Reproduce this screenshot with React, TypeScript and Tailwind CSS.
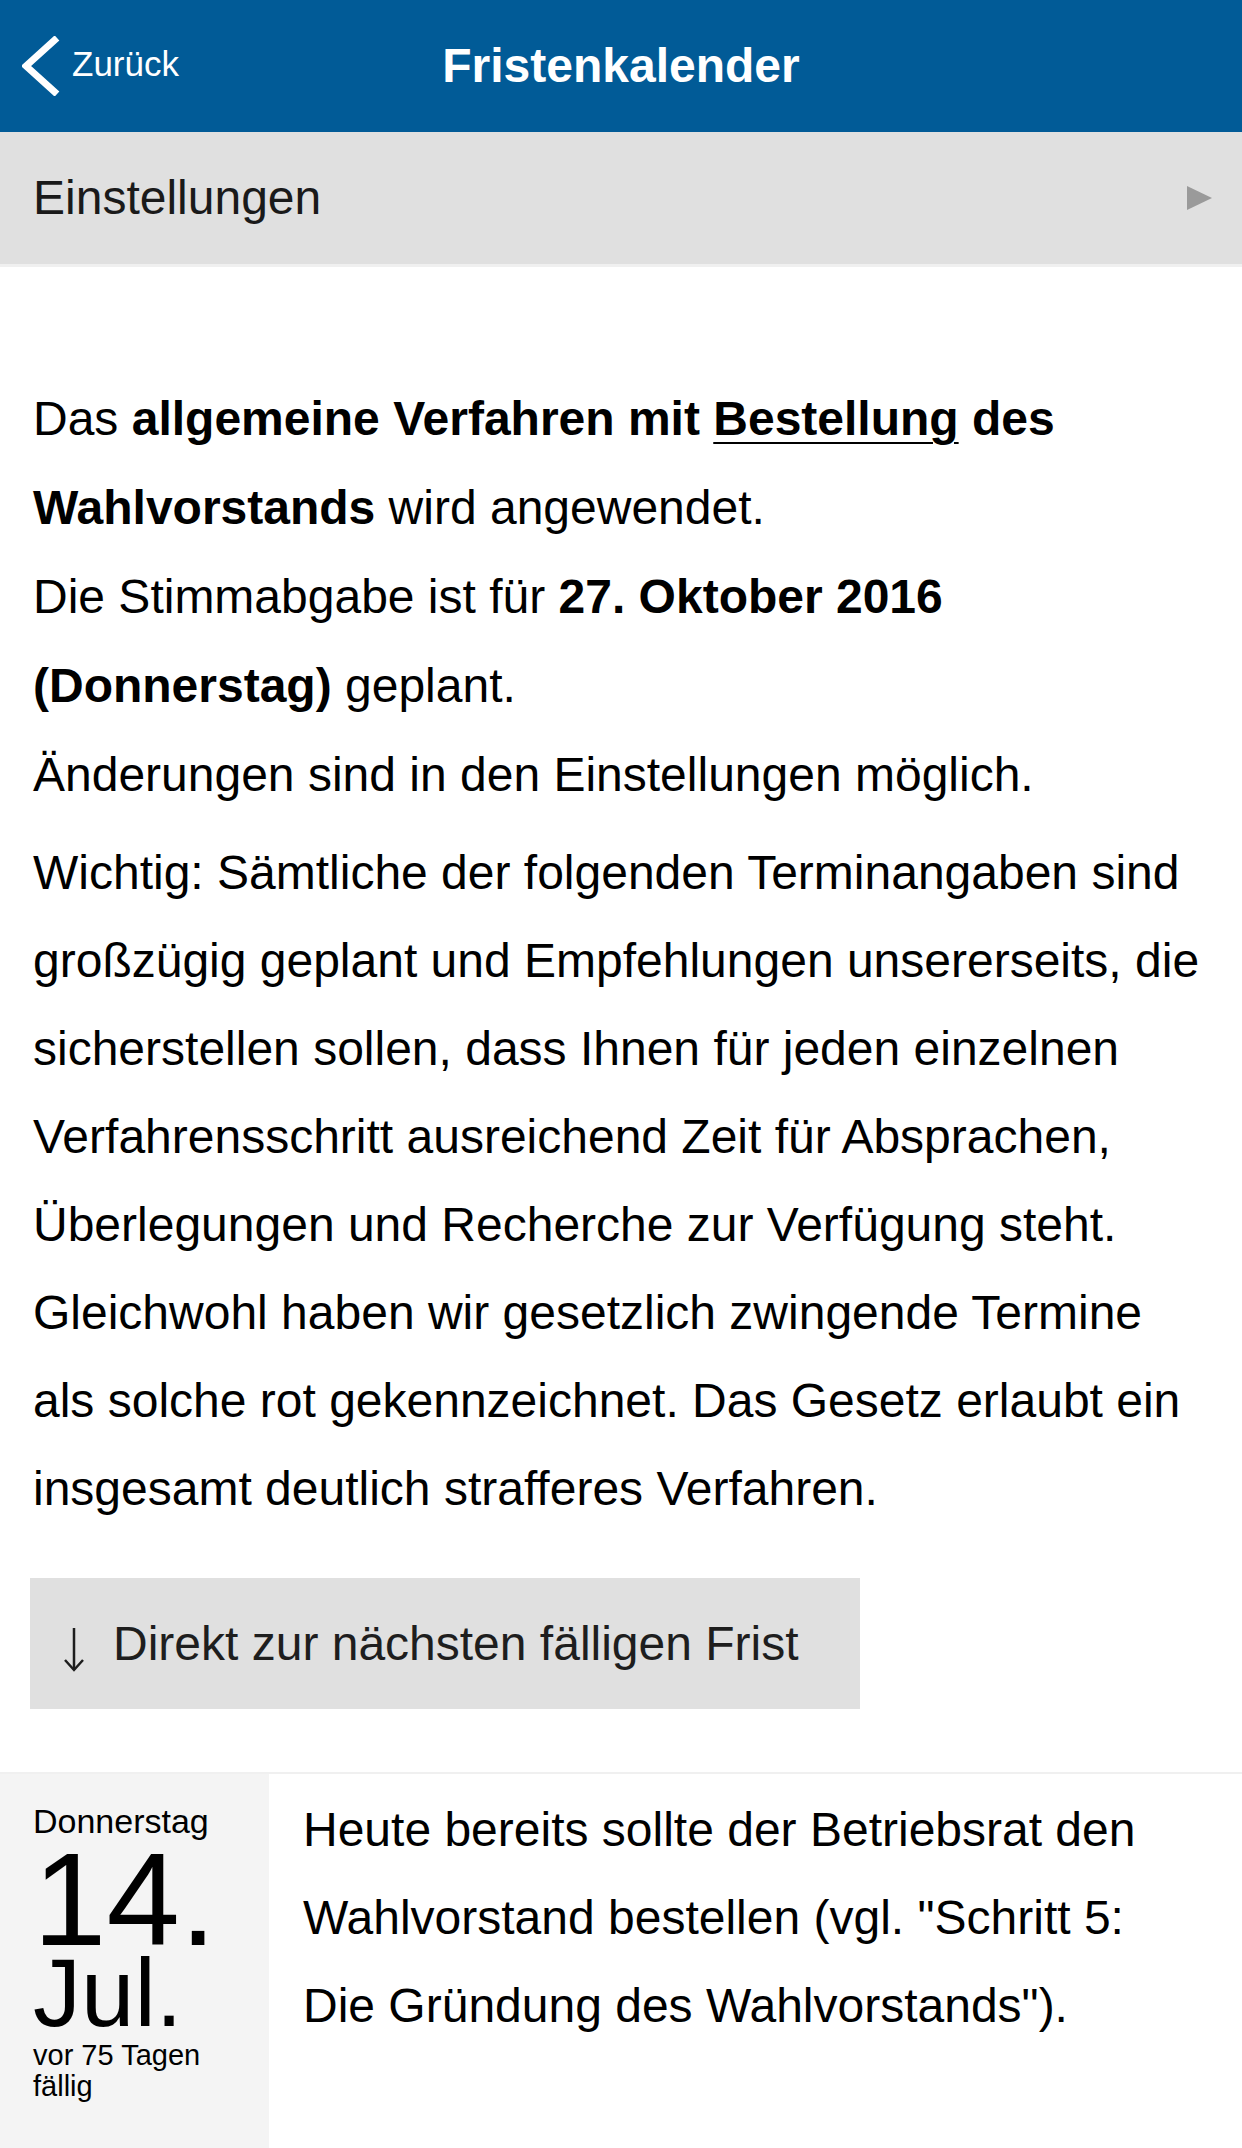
import React from "react";

const BackChevron: React.FC = () => (
  <svg width="40" height="60" viewBox="0 0 40 60" className="shrink-0">
    <polyline
      points="35,2 4,30 35,58"
      fill="none"
      stroke="#ffffff"
      strokeWidth="7"
      strokeLinecap="butt"
      strokeLinejoin="miter"
    />
  </svg>
);

const DownArrow: React.FC = () => (
  <svg width="22" height="44" viewBox="0 0 22 44" className="shrink-0">
    <line x1="11" y1="0" x2="11" y2="42" stroke="#1e1e1e" strokeWidth="2.5" />
    <polyline points="2,32 11,42 20,32" fill="none" stroke="#1e1e1e" strokeWidth="2.5" />
  </svg>
);

const introLines = [
  "Wichtig: Sämtliche der folgenden Terminangaben sind",
  "großzügig geplant und Empfehlungen unsererseits, die",
  "sicherstellen sollen, dass Ihnen für jeden einzelnen",
  "Verfahrensschritt ausreichend Zeit für Absprachen,",
  "Überlegungen und Recherche zur Verfügung steht.",
  "Gleichwohl haben wir gesetzlich zwingende Termine",
  "als solche rot gekennzeichnet. Das Gesetz erlaubt ein",
  "insgesamt deutlich strafferes Verfahren.",
];

const deadlineLines = [
  "Heute bereits sollte der Betriebsrat den",
  'Wahlvorstand bestellen (vgl. "Schritt 5:',
  'Die Gründung des Wahlvorstands").',
];

export default function App() {
  return (
    <div className="w-[1242px] h-[2148px] overflow-hidden bg-white font-['Liberation_Sans',Arial,sans-serif] text-black">
      {/* nav bar */}
      <header className="grid h-[132px] grid-cols-[1fr_auto_1fr] items-center bg-[#015b97] text-white">
        <div className="flex items-center pl-[22px]">
          <BackChevron />
          <span className="mb-[4px] ml-[10px] text-[35px]">Zurück</span>
        </div>
        <h1 className="text-[48px] font-bold">Fristenkalender</h1>
        <div />
      </header>

      {/* settings row */}
      <div className="flex h-[135px] items-center justify-between border-b-[3px] border-[#f0f0f0] bg-[#e0e0e0] pl-[33px] pr-[30px]">
        <span className="text-[48px] text-[#1a1a1a]">Einstellungen</span>
        <svg width="25" height="24" viewBox="0 0 25 24">
          <polygon points="0,0 25,12 0,24" fill="#9a9a9a" />
        </svg>
      </div>

      {/* intro text */}
      <div className="px-[33px] pt-[107px] text-[48px] whitespace-nowrap">
        <p className="leading-[89px]">
          Das{" "}
          <b>
            allgemeine Verfahren mit{" "}
            <u className="decoration-[2px] underline-offset-[7px]">Bestellung</u> des
          </b>
          <br />
          <b>Wahlvorstands</b> wird angewendet.
          <br />
          Die Stimmabgabe ist für <b>27. Oktober 2016</b>
          <br />
          <b>(Donnerstag)</b> geplant.
          <br />
          Änderungen sind in den Einstellungen möglich.
        </p>
        <p className="mt-[10px] leading-[88px]">
          {introLines.map((line) => (
            <span key={line} className="block">
              {line}
            </span>
          ))}
        </p>
      </div>

      {/* jump button */}
      <div className="mt-[45px] px-[30px]">
        <button className="flex h-[131px] w-[830px] items-center bg-[#e0e0e0] pl-[33px] text-[48px] text-[#1e1e1e]">
          <span className="mt-[12px] w-[50px]">
            <DownArrow />
          </span>
          <span>Direkt zur nächsten fälligen Frist</span>
        </button>
      </div>

      {/* deadline entry */}
      <div className="mt-[63px] flex h-[376px] border-t-2 border-[#f0f0f0]">
        <div className="w-[269px] shrink-0 bg-[#f4f4f4] pl-[33px] pt-[29px]">
          <div className="text-[34px] leading-[36px]">Donnerstag</div>
          <div className="mt-[6px] text-[132px] leading-[110px]">14.</div>
          <div className="text-[96px] leading-[76px]">Jul.</div>
          <div className="mt-[9px] text-[29px] leading-[31px]">
            vor 75 Tagen
            <br />
            fällig
          </div>
        </div>
        <div className="flex-1 pl-[34px] pt-[12px] text-[48px] leading-[88px] whitespace-nowrap">
          {deadlineLines.map((line) => (
            <span key={line} className="block">
              {line}
            </span>
          ))}
        </div>
      </div>
    </div>
  );
}
